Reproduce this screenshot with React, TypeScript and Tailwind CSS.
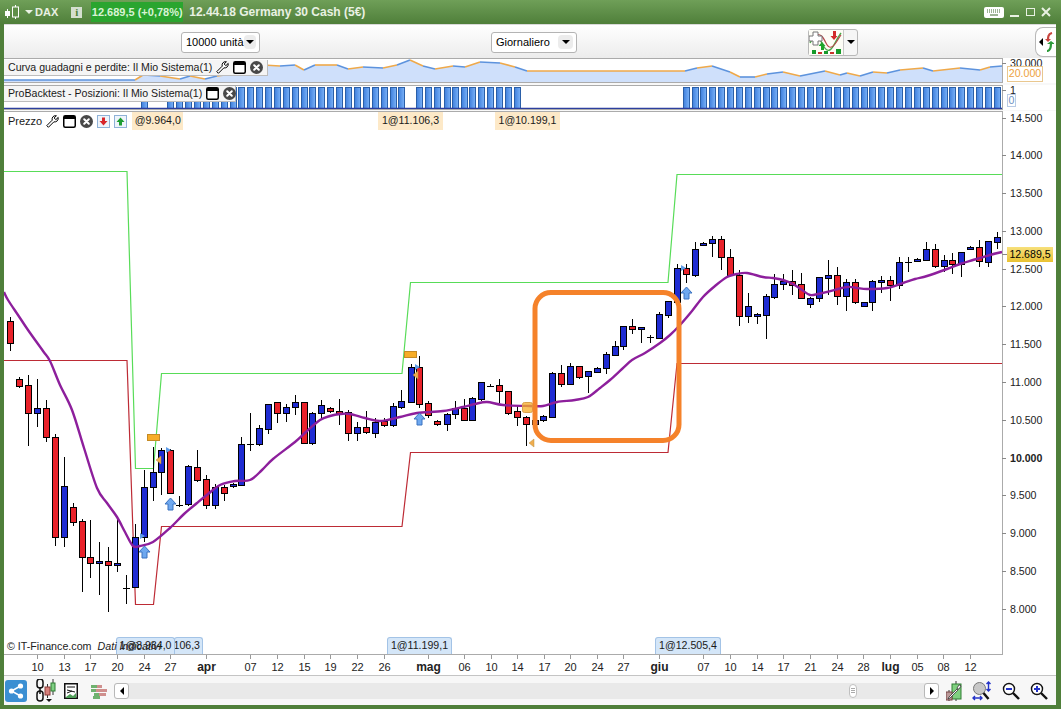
type Candle = [number, number, number, number, number, "r" | "b" | "k"];

const CANDLES: Candle[] = [
  [10, 321, 343, 317, 351, "r"], [19, 379, 386, 377, 388, "r"], [28, 385, 413, 375, 446, "r"], [37, 408, 413, 379, 427, "b"],
  [46, 408, 437, 400, 442, "r"], [55, 437, 537, 434, 546, "r"], [64, 486, 537, 457, 547, "b"], [73, 507, 522, 503, 526, "r"],
  [82, 521, 557, 519, 592, "r"], [90, 557, 563, 520, 578, "r"], [99, 561, 563, 542, 595, "b"], [108, 561, 565, 547, 612, "r"],
  [117, 563, 565, 518, 572, "b"], [126, 588, 588, 575, 604, "k"], [135, 537, 587, 524, 588, "b"], [144, 487, 537, 470, 542, "b"],
  [153, 472, 487, 447, 501, "b"], [161, 450, 472, 448, 495, "b"], [170, 450, 493, 449, 494, "r"], [179, 505, 505, 496, 507, "k"],
  [188, 466, 504, 465, 506, "b"], [197, 467, 480, 450, 482, "r"], [206, 479, 505, 475, 509, "r"], [215, 487, 505, 484, 509, "b"],
  [224, 487, 493, 485, 501, "r"], [233, 484, 486, 483, 488, "b"], [241, 444, 485, 437, 486, "b"], [250, 444, 444, 413, 451, "k"],
  [259, 428, 444, 425, 446, "b"], [268, 404, 429, 404, 434, "b"], [277, 402, 413, 402, 423, "r"], [286, 407, 413, 404, 422, "b"],
  [295, 402, 407, 395, 415, "b"], [304, 402, 443, 402, 444, "r"], [312, 413, 443, 412, 445, "b"], [321, 405, 413, 400, 418, "b"],
  [330, 408, 411, 407, 413, "r"], [339, 411, 413, 399, 425, "r"], [348, 412, 433, 410, 441, "r"], [357, 427, 433, 422, 441, "b"],
  [366, 427, 432, 411, 434, "r"], [375, 422, 433, 418, 438, "b"], [384, 421, 425, 418, 427, "r"], [393, 406, 425, 403, 427, "b"],
  [401, 401, 407, 390, 409, "b"], [411, 367, 402, 364, 403, "b"], [419, 367, 404, 356, 408, "r"], [428, 403, 415, 401, 418, "r"],
  [437, 421, 424, 420, 426, "r"], [447, 414, 424, 413, 431, "b"], [455, 408, 414, 401, 419, "b"], [464, 408, 420, 399, 420, "r"],
  [472, 398, 420, 397, 421, "b"], [481, 382, 399, 382, 401, "b"], [490, 386, 386, 384, 387, "k"], [499, 385, 391, 379, 403, "r"],
  [508, 391, 413, 391, 415, "r"], [517, 411, 417, 405, 426, "r"], [526, 417, 424, 416, 446, "r"], [535, 420, 424, 418, 426, "b"],
  [543, 416, 420, 415, 422, "b"], [552, 373, 417, 372, 417, "b"], [561, 373, 384, 365, 387, "r"], [570, 366, 384, 363, 385, "b"],
  [579, 366, 377, 366, 379, "r"], [588, 371, 376, 371, 393, "b"], [597, 368, 372, 367, 373, "b"], [606, 354, 368, 352, 374, "b"],
  [615, 346, 355, 341, 356, "b"], [623, 326, 346, 326, 350, "b"], [632, 326, 329, 319, 334, "r"], [641, 327, 329, 327, 343, "b"],
  [650, 337, 337, 335, 343, "k"], [659, 314, 338, 312, 339, "b"], [668, 301, 315, 301, 318, "b"], [677, 268, 302, 264, 302, "b"],
  [686, 268, 274, 264, 283, "r"], [695, 249, 275, 242, 277, "b"], [703, 243, 245, 242, 246, "b"], [712, 239, 243, 236, 257, "b"],
  [721, 239, 257, 236, 270, "r"], [730, 257, 275, 249, 275, "r"], [739, 275, 316, 270, 326, "r"], [748, 306, 316, 293, 323, "b"],
  [757, 314, 316, 313, 324, "b"], [766, 296, 315, 294, 339, "b"], [774, 284, 297, 274, 299, "b"], [783, 281, 284, 274, 290, "b"],
  [792, 281, 285, 270, 295, "r"], [801, 284, 298, 273, 299, "r"], [810, 298, 304, 297, 308, "b"], [819, 277, 298, 277, 302, "b"],
  [828, 275, 278, 260, 295, "b"], [837, 275, 296, 267, 305, "r"], [846, 282, 296, 279, 311, "b"], [855, 282, 302, 279, 304, "r"],
  [864, 302, 306, 302, 307, "b"], [872, 281, 302, 280, 311, "b"], [881, 280, 282, 276, 293, "b"], [890, 280, 285, 276, 301, "r"],
  [899, 262, 285, 257, 289, "b"], [908, 262, 262, 257, 272, "k"], [917, 259, 261, 258, 262, "b"], [926, 249, 260, 242, 261, "b"],
  [935, 249, 266, 244, 268, "r"], [944, 260, 266, 255, 272, "b"], [952, 260, 264, 253, 274, "r"], [961, 252, 264, 252, 277, "b"],
  [970, 247, 249, 246, 250, "b"], [979, 247, 261, 240, 267, "r"], [988, 241, 262, 241, 267, "b"], [997, 237, 242, 232, 249, "b"],
];

const GREEN_LINE = "4,171.5 127,171.5 135.5,468.5 153.5,468.5 161.5,373.5 402,373.5 410.5,282.5 668,282.5 677,174.5 1002,174.5";
const RED_LINE = "4,360.5 127,360.5 135.5,604.5 153.5,604.5 161.5,526.5 402,526.5 410.5,452.5 668,452.5 677,363.5 1002,363.5";
const AVERAGE: [number, number][] = [
  [4, 292], [8, 300], [18, 315], [28, 330], [43, 351], [50, 361], [60, 385], [72, 410], [84, 448], [97, 488], [107, 503], [117, 517],
  [125, 532], [133, 546], [140, 546], [153, 542], [170, 528], [184, 514], [197, 503], [208, 494], [220, 485], [235, 481], [250, 480],
  [262, 470], [273, 459], [295, 442], [307, 431], [320, 420], [330, 416], [340, 414], [350, 414], [365, 418], [380, 421], [400, 417],
  [417, 413], [443, 411], [463, 407], [475, 404], [487, 402], [503, 405], [530, 406], [543, 406], [557, 402], [575, 400], [588, 397],
  [600, 388], [610, 380], [622, 369], [632, 360], [645, 353], [660, 343], [670, 335], [680, 325], [692, 311], [703, 297], [715, 286],
  [727, 277], [737, 274], [747, 273], [763, 277], [773, 278], [783, 280], [793, 284], [802, 290], [810, 295], [818, 294], [827, 292],
  [847, 287], [857, 288], [867, 289], [887, 288], [903, 283], [915, 279], [927, 276], [947, 269], [960, 264], [973, 260], [990, 255],
  [1002, 252],
];

// equity curve, every other stretch is orange
const EQUITY: [number, number][] = [
  [4, 80], [135, 80], [143, 75], [160, 76], [180, 79], [190, 76], [205, 79], [217, 76], [233, 74], [263, 65], [280, 66], [295, 65],
  [304, 70], [315, 65], [337, 65], [348, 69], [363, 67], [383, 68], [397, 65], [410, 60], [423, 66], [435, 69], [453, 66], [465, 67],
  [480, 62], [500, 63], [515, 67], [527, 71], [685, 71], [697, 68], [712, 66], [730, 72], [740, 77], [755, 77], [767, 74], [783, 72],
  [800, 76], [825, 71], [840, 75], [847, 73], [860, 76], [873, 72], [887, 73], [900, 70], [923, 68], [933, 71], [960, 68], [980, 70],
  [990, 67], [1002, 66],
];

const PRICES: [string, number, boolean?][] = [
  ["14.500", 118], ["14.000", 155], ["13.500", 193], ["13.000", 231], ["12.500", 269], ["12.000", 306], ["11.500", 344],
  ["11.000", 382], ["10.500", 420], ["10.000", 458, true], ["9.500", 495], ["9.000", 533], ["8.500", 571], ["8.000", 609],
];

const DATES: [string, number, boolean?][] = [
  ["10", 37], ["13", 64], ["17", 90], ["20", 117], ["24", 144], ["27", 170], ["apr", 206, true], ["07", 250], ["12", 277], ["15", 304],
  ["19", 330], ["22", 357], ["26", 384], ["mag", 428, true], ["06", 464], ["10", 491], ["14", 517], ["17", 544], ["20", 570], ["24", 597],
  ["27", 623], ["giu", 659, true], ["07", 703], ["10", 730], ["14", 757], ["17", 783], ["21", 810], ["24", 837], ["28", 863],
  ["lug", 890, true], ["05", 917], ["08", 943], ["12", 970],
];

const UP_ARROWS = [[144, 546], [170, 498], [419, 413], [686, 287]];
const BLUE_FLAGS = [[140, 536], [166, 450], [415, 367], [681, 268]];
const ORANGE_FLAGS = [[157, 460], [414, 375], [530, 443]];

const isInPosition = (x: number) => x === 144 || (x >= 170 && x <= 401) || (x >= 419 && x <= 517) || x >= 686;

// catmull-rom through the points so the average doesn't look kinked
function smoothPath(pts: [number, number][]) {
  let d = `M${pts[0][0]} ${pts[0][1]}`;
  for (let i = 0; i < pts.length - 1; i++) {
    const p0 = pts[Math.max(i - 1, 0)];
    const p1 = pts[i];
    const p2 = pts[i + 1];
    const p3 = pts[Math.min(i + 2, pts.length - 1)];
    const c1x = p1[0] + (p2[0] - p0[0]) / 6;
    const c1y = p1[1] + (p2[1] - p0[1]) / 6;
    const c2x = p2[0] - (p3[0] - p1[0]) / 6;
    const c2y = p2[1] - (p3[1] - p1[1]) / 6;
    d += `C${c1x} ${c1y} ${c2x} ${c2y} ${p2[0]} ${p2[1]}`;
  }
  return d;
}

function PriceTag({ text, className }: { text: string; className: string }) {
  return <div className={`absolute flex items-center justify-center whitespace-nowrap ${className}`}>{text}</div>;
}

function WindowIcon() {
  return (
    <svg width="13" height="13" viewBox="0 0 13 13" className="shrink-0">
      <rect x="0.75" y="0.75" width="11.5" height="11.5" rx="1.5" fill="#fff" stroke="#000" strokeWidth="1.5" />
      <rect x="1" y="1" width="11" height="3" fill="#000" />
    </svg>
  );
}

function CloseIcon() {
  return (
    <svg width="13" height="13" viewBox="0 0 13 13" className="shrink-0">
      <circle cx="6.5" cy="6.5" r="6.5" fill="#484848" />
      <path d="M4.2 4.2l4.6 4.6M8.8 4.2l-4.6 4.6" stroke="#fff" strokeWidth="2" strokeLinecap="round" />
    </svg>
  );
}

function ToolIcon() {
  return (
    <svg width="13" height="13" viewBox="0 0 13 13" className="shrink-0">
      <path
        d="M0.8 10.6L6.2 5.2C5.6 2.6 7.2 0.6 9.8 0.6L10.4 0.7L8.2 3L9.8 4.7L12.2 2.4C12.7 5.2 10.6 7.4 7.8 6.9L2.4 12.3z"
        fill="#fff"
        stroke="#000"
        strokeWidth="1"
        strokeLinejoin="round"
      />
    </svg>
  );
}

function OrderBox({ color, up }: { color: string; up?: boolean }) {
  return (
    <svg width="13" height="13" viewBox="0 0 13 13" className="shrink-0">
      <rect x="0.5" y="0.5" width="12" height="12" fill="#eef4fb" stroke="#8fb2d8" />
      <path d={up ? "M6.5 2.5L10.5 7H8v3.5H5V7H2.5z" : "M6.5 10.5L10.5 6H8V2.5H5V6H2.5z"} fill={color} />
    </svg>
  );
}

function SelectBox({ label, className }: { label: string; className: string }) {
  return (
    <div className={`flex h-[21px] items-center justify-between rounded-[3px] border border-[#b4b4b4] bg-white pl-1 pr-[3px] ${className}`}>
      <span className="whitespace-nowrap text-[11px] text-black">{label}</span>
      <span className="flex h-[14px] w-[15px] items-center justify-center rounded-sm bg-[#ececec]">
        <span className="h-0 w-0 border-x-[4px] border-t-[4px] border-x-transparent border-t-black" />
      </span>
    </div>
  );
}

function StrategyButton() {
  return (
    <div className="ml-[231px] flex h-[27px] w-[50px] rounded-[3px] border border-[#b8b8b8] bg-[#f6f6f6]">
      <svg width="34" height="25" viewBox="0 0 34 25" className="shrink-0">
        <rect width="34" height="25" fill="#fdfdf6" />
        <path d="M1 13C6 3 9 5 14 15s9 4 12-2 4-7 6-10" fill="none" stroke="#4aa84a" strokeWidth="1.4" />
        <path d="M6 5c6-2 8 2 11 8s6 5 9 1 3-5 6-9" fill="none" stroke="#b5474a" strokeWidth="1.2" />
        <path d="M4 2h5v4h4v5H9v4H4v-4H0V6h4z" fill="#fff" stroke="#777" strokeWidth="1" />
        <path d="M13 12l3.5 4H15v4h-3v-4h-2.5z" fill="#1ea52b" />
        <path d="M25 10l3.5-4H27V1h-3v5h-2.5z" fill="#d22b2b" />
        <path d="M3 20h4v4H3zM15 21h4v3h-4zM27 19h5v5h-5z" fill="#169a2a" />
        <path d="M9 22h4v2H9zM21 22h4v2h-4z" fill="#c9332f" />
      </svg>
      <span className="flex flex-1 items-center justify-center border-l border-[#c8c8c8]">
        <span className="h-0 w-0 border-x-[4px] border-t-[4px] border-x-transparent border-t-black" />
      </span>
    </div>
  );
}

function IndicatorTab() {
  return (
    <div className="ml-auto flex h-[30px] w-[21px] items-center rounded-l-lg border-y border-l border-[#b8b8b8] bg-white pl-[3px]">
      <span className="h-0 w-0 shrink-0 border-y-[4px] border-r-[4px] border-y-transparent border-r-black" />
      <svg width="10" height="20" viewBox="0 0 10 20" className="ml-px shrink-0">
        <path d="M8 1C4 2 4 5 4 9" fill="none" stroke="#c8453f" strokeWidth="2.2" />
        <path d="M1 7h6l-3 3z" fill="#c8453f" />
        <path d="M3 19c3 0 4-3 4-8" fill="none" stroke="#2d9b3b" strokeWidth="2.2" />
        <path d="M3 12h8l-4-3z" fill="#2d9b3b" />
      </svg>
    </div>
  );
}

function EquityPane() {
  const area = `4,82 ${EQUITY.map((p) => p.join(",")).join(" ")} 1002,82`;
  return (
    <div className="relative h-[25px] shrink-0 bg-white">
      <svg viewBox="4 58 1052 25" className="block h-full w-full">
        <polygon points={area} fill="#cfe0fb" />
        {EQUITY.slice(1).map((p, i) => (
          <line key={i} x1={EQUITY[i][0]} y1={EQUITY[i][1]} x2={p[0]} y2={p[1]} stroke={i % 2 ? "#efa94a" : "#5d93dd"} strokeWidth="1.6" />
        ))}
        <rect x="3" y="58.5" width="999.5" height="24" fill="none" stroke="#ababab" />
        <line x1="1002" y1="63.5" x2="1006" y2="63.5" stroke="#888" />
        <text x="1010" y="67" fontSize="10.6" fill="#222">30.000</text>
      </svg>
      <PriceTag text="20.000" className="left-[1003px] top-[8px] h-[16px] w-[36px] border border-[#e9c78f] bg-white text-[10.6px] text-[#eda23e]" />
      <div className="absolute left-0 top-[2px] flex h-[16px] w-[264px] items-center gap-[4px] border-b border-r border-[#bdbdbd] bg-[#f5f5f5] pl-1 text-[10.6px] text-[#1a1a1a]">
        <span className="whitespace-nowrap">Curva guadagni e perdite: Il Mio Sistema(1)</span>
        <ToolIcon />
        <WindowIcon />
        <CloseIcon />
      </div>
    </div>
  );
}

function PositionPane() {
  return (
    <div className="relative mt-[2px] h-[25px] shrink-0 bg-white">
      <svg viewBox="4 85 1052 25" className="block h-full w-full">
        <defs>
          <linearGradient id="bar" x1="0" x2="1" y1="0" y2="0">
            <stop offset="0" stopColor="#3f7fdc" />
            <stop offset="1" stopColor="#7ab2f8" />
          </linearGradient>
        </defs>
        {CANDLES.filter((c) => isInPosition(c[0])).map((c) => (
          <rect key={c[0]} x={c[0] - 2.5} y="87.5" width="6" height="21" fill="url(#bar)" stroke="#2a5fa8" />
        ))}
        <line x1="4" y1="108.5" x2="1002" y2="108.5" stroke="#2c3f9e" strokeWidth="1.5" />
        <rect x="3" y="85.5" width="999.5" height="24" fill="none" stroke="#ababab" />
        <line x1="1002" y1="90.5" x2="1006" y2="90.5" stroke="#888" />
        <text x="1010" y="94" fontSize="10.6" fill="#222">1</text>
      </svg>
      <PriceTag text="0" className="left-[1003px] top-[9px] h-[13px] w-[9px] border border-[#b9cbe4] bg-white text-[10.6px] text-[#6f93c4]" />
      <div className="absolute left-0 top-[1px] flex h-[16px] w-[232px] items-center gap-[4px] border-b border-r border-[#bdbdbd] bg-[#f5f5f5] pl-1 text-[10.6px] text-[#1a1a1a]">
        <span className="whitespace-nowrap">ProBacktest - Posizioni: Il Mio Sistema(1)</span>
        <WindowIcon />
        <CloseIcon />
      </div>
    </div>
  );
}

function CandleMark({ c }: { c: Candle }) {
  const [x, top, bottom, wickTop, wickBottom, kind] = c;
  const height = bottom - top;
  return (
    <g>
      <line x1={x + 0.5} y1={wickTop} x2={x + 0.5} y2={wickBottom} stroke="#000" />
      {kind === "k" ? (
        <line x1={x - 3} y1={top + 0.5} x2={x + 4} y2={top + 0.5} stroke="#000" />
      ) : (
        <rect x={x - 2.5} y={top + 0.5} width="6" height={height} fill={kind === "r" ? "#e9222a" : "#1f2cd3"} stroke="#000" />
      )}
    </g>
  );
}

function PricePane() {
  return (
    <div className="relative mt-px h-[544px] shrink-0 bg-white">
      <svg viewBox="4 111 1052 544" className="block h-full w-full font-['Liberation_Sans',sans-serif]">
        <polyline points={GREEN_LINE} fill="none" stroke="#58dc58" strokeWidth="1.2" />
        <polyline points={RED_LINE} fill="none" stroke="#bd2b35" strokeWidth="1.2" />
        {CANDLES.map((c) => (
          <CandleMark key={c[0]} c={c} />
        ))}
        <path d={smoothPath(AVERAGE)} fill="none" stroke="#8d1f9c" strokeWidth="2.4" strokeLinejoin="round" />

        {UP_ARROWS.map(([x, y]) => (
          <path key={x} d={`M${x + 0.5} ${y}l5.5 6h-3v6h-5v-6h-3z`} fill="#6ea8ef" stroke="#3a72c0" />
        ))}
        {BLUE_FLAGS.map(([x, y]) => (
          <path key={x} d={`M${x} ${y - 3}l5 3-5 3z`} fill="#5f9de8" />
        ))}
        {ORANGE_FLAGS.map(([x, y]) => (
          <path key={x} d={`M${x + 4} ${y - 4}l-5 4 5 4z`} fill="#f0ad4e" stroke="#b89040" strokeWidth="0.5" />
        ))}
        <rect x="147.5" y="434.5" width="12" height="6" fill="#f7ad27" stroke="#c48a25" />
        <rect x="404.5" y="351.5" width="12" height="6" fill="#f7ad27" stroke="#c48a25" />
        <rect x="522.5" y="402.5" width="10" height="10" rx="2" fill="#f7ad27" fillOpacity="0.75" stroke="#d9a04a" />

        <rect x="535" y="292.5" width="144" height="148" rx="16" fill="none" stroke="#f5822a" strokeWidth="5" />

        <line x1="1002.5" y1="111" x2="1002.5" y2="655" stroke="#ababab" />
        <line x1="3" y1="111.5" x2="1002" y2="111.5" stroke="#ababab" />
        <line x1="3" y1="654.5" x2="1002" y2="654.5" stroke="#ababab" />
        {PRICES.map(([label, y, bold]) => (
          <g key={label}>
            <line x1="1002" y1={y + 0.5} x2="1006" y2={y + 0.5} stroke="#888" />
            <text x="1010" y={y + 4} fontSize="10.6" fontWeight={bold ? 700 : 400} fill="#222">{label}</text>
          </g>
        ))}
        <line x1="1002" y1="254.5" x2="1007" y2="254.5" stroke="#888" />
      </svg>

      <PriceTag text="12.689,5" className="left-[1003px] top-[136px] h-[15px] w-[46px] bg-gradient-to-b from-[#f7e07a] to-[#e9c22f] text-[10.6px] text-black" />

      <div className="absolute left-0 top-px flex h-[18px] items-center pl-1 text-[11px] text-[#1a1a1a]">
        <span className="mr-[4px]">Prezzo</span>
        <div className="flex items-center gap-[4px]">
          <ToolIcon />
          <WindowIcon />
          <CloseIcon />
          <OrderBox color="#d8262b" />
          <OrderBox color="#1e9d32" up />
        </div>
        <span className="ml-[5px] flex h-[18px] w-[51px] items-center justify-center bg-[#fde9c8] text-[10.6px]">@9.964,0</span>
      </div>
      <PriceTag text="1@11.106,3" className="left-[374px] top-px h-[18px] w-[65px] bg-[#fde9c8] text-[10.6px] text-[#1a1a1a]" />
      <PriceTag text="1@10.199,1" className="left-[491px] top-px h-[18px] w-[65px] bg-[#fde9c8] text-[10.6px] text-[#1a1a1a]" />

      <PriceTag text="106,3" className="left-[170px] top-[526px] h-[17px] w-[29px] justify-end rounded-t-[3px] border border-b-0 border-[#a3c3e6] bg-[#d4e6f8] pr-[2px] text-[10.6px] text-[#1a1a1a]" />
      <PriceTag text="1@8.984,0" className="left-[112px] top-[526px] h-[17px] w-[59px] rounded-t-[3px] border border-b-0 border-[#a3c3e6] bg-[#d4e6f8] text-[10.6px] text-[#1a1a1a]" />
      <PriceTag text="1@11.199,1" className="left-[383px] top-[526px] h-[17px] w-[65px] rounded-t-[3px] border border-b-0 border-[#a3c3e6] bg-[#d4e6f8] text-[10.6px] text-[#1a1a1a]" />
      <PriceTag text="1@12.505,4" className="left-[651px] top-[526px] h-[17px] w-[66px] rounded-t-[3px] border border-b-0 border-[#a3c3e6] bg-[#d4e6f8] text-[10.6px] text-[#1a1a1a]" />
      <div className="absolute bottom-[1px] left-[3px] flex gap-[6px] whitespace-nowrap text-[10.7px] text-[#222]">
        <span>© IT-Finance.com</span>
        <i>Dati Indicativi</i>
      </div>
    </div>
  );
}

function TimeAxis() {
  return (
    <div className="h-[21px] shrink-0 border-b border-[#c4c4c4] bg-white">
      <svg viewBox="4 655 1052 20" className="block h-full w-full">
        {DATES.map(([label, x, bold]) => (
          <g key={x}>
            <line x1={x + 0.5} y1="655" x2={x + 0.5} y2="659" stroke="#999" />
            <text x={x + 0.5} y="671" fontSize={bold ? 12 : 11} fontWeight={bold ? 700 : 400} textAnchor="middle" fill="#222">{label}</text>
          </g>
        ))}
      </svg>
    </div>
  );
}

function ScrollArrow({ right }: { right?: boolean }) {
  return (
    <span className="flex h-full w-[15px] items-center justify-center rounded-[3px] border border-[#b8b8b8] bg-white">
      <span className={`h-0 w-0 border-y-[4px] border-y-transparent ${right ? "border-l-[4px] border-l-black" : "border-r-[4px] border-r-black"}`} />
    </span>
  );
}

function BottomBar() {
  return (
    <div className="flex h-[29px] shrink-0 items-center bg-[#f7f7f7]">
      <div className="ml-px flex h-[22px] w-[22px] items-center justify-center rounded-[3px] bg-[#3b8fd2]">
        <svg width="16" height="16" viewBox="0 0 16 16">
          <path d="M12.5 3L3.5 8l9 5" fill="none" stroke="#fff" strokeWidth="1.5" />
          <circle cx="12.5" cy="3" r="2.6" fill="#fff" />
          <circle cx="3.5" cy="8" r="2.6" fill="#fff" />
          <circle cx="12.5" cy="13" r="2.6" fill="#fff" />
        </svg>
      </div>
      <svg width="24" height="24" viewBox="0 0 24 24" className="ml-[5px]">
        <path d="M5 3a3 3 0 016 0v3a3 3 0 01-6 0zM5 15a3 3 0 016 0v4a3 3 0 01-6 0z" fill="none" stroke="#111" strokeWidth="1.5" />
        <path d="M8 8v7" stroke="#111" strokeWidth="1.5" />
        <path d="M15.5 5v14" stroke="#333" />
        <rect x="13" y="8" width="5" height="8" fill="#d9817c" stroke="#8a3c39" />
        <path d="M21 0v16" stroke="#333" />
        <rect x="19" y="4" width="4" height="8" fill="#7fcf83" stroke="#2e7d32" />
        <path d="M14 20h6l-3 3z" fill="#111" />
      </svg>
      <svg width="14" height="16" viewBox="0 0 14 16" className="ml-[8px]">
        <rect x="0.75" y="0.75" width="12.5" height="14.5" fill="#fff" stroke="#111" strokeWidth="1.5" />
        <path d="M3 4h8M3 7l8 2M3 10l5-2" stroke="#111" />
        <path d="M2 14l4-3 3 2 3-3v5H2z" fill="#4f9e58" />
      </svg>
      <svg width="16" height="16" viewBox="0 0 16 16" className="ml-[13px]">
        <path d="M0 2h8v3H0zM3 10h7v3H3zM2 13h7v3H2z" fill="#6fb26f" />
        <path d="M6 2h5v3H6zM5 6h11v3H5zM8 10h7v3H8z" fill="#cf8f8d" />
        <path d="M0 6h5v3H0z" fill="#6fb26f" />
      </svg>
      <div className="ml-[7px] flex h-[16px] w-[825px] items-center justify-between rounded-[3px] bg-[#e9e9e9]">
        <ScrollArrow />
        <div className="ml-auto mr-[67px] flex h-[14px] w-[8px] flex-col items-center justify-center gap-px rounded-sm border border-[#c0c0c0] bg-white">
          <span className="h-px w-[4px] bg-[#aaa]" />
          <span className="h-px w-[4px] bg-[#aaa]" />
          <span className="h-px w-[4px] bg-[#aaa]" />
        </div>
        <ScrollArrow right />
      </div>
      <svg width="16" height="20" viewBox="0 0 16 20" className="ml-[7px]">
        <path d="M10 0v20" stroke="#333" />
        <rect x="6" y="3" width="9" height="15" fill="#7fd07f" stroke="#2e7d32" />
        <path d="M3 9v11" stroke="#333" />
        <rect x="0" y="11" width="6" height="8" fill="#b99" stroke="#744" />
        <path d="M13 4l-2 3 1 2-8 8-2 1 1-2 8-8 2 0 2-3-1-1z" fill="#fff" stroke="#333" strokeWidth="0.8" />
      </svg>
      <svg width="20" height="20" viewBox="0 0 20 20" className="ml-[10px]">
        <circle cx="7.5" cy="7.5" r="6" fill="#c8c8c8" stroke="#777" />
        <path d="M11.5 12l5 6" stroke="#111" strokeWidth="2.5" />
        <path d="M16.5 1v9M14.5 3l2-2 2 2M14.5 8l2 2 2-2" fill="none" stroke="#2433c8" strokeWidth="1.4" />
        <path d="M1 17h9M3 15l-2 2 2 2M8 15l2 2-2 2" fill="none" stroke="#2433c8" strokeWidth="1.4" />
      </svg>
      <svg width="18" height="18" viewBox="0 0 18 18" className="ml-[10px]">
        <circle cx="7" cy="7" r="5.5" fill="#fff" stroke="#111" strokeWidth="1.4" />
        <path d="M11 11l6 6" stroke="#111" strokeWidth="2.4" />
        <path d="M4 7h6" stroke="#2433c8" strokeWidth="2" />
      </svg>
      <svg width="18" height="18" viewBox="0 0 18 18" className="ml-[10px]">
        <circle cx="7" cy="7" r="5.5" fill="#fff" stroke="#111" strokeWidth="1.4" />
        <path d="M11 11l6 6" stroke="#111" strokeWidth="2.4" />
        <path d="M4 7h6M7 4v6" stroke="#2433c8" strokeWidth="2" />
      </svg>
    </div>
  );
}

function TitleBar() {
  return (
    <div className="flex h-[24px] shrink-0 items-center bg-gradient-to-b from-[#6f9f58] to-[#4f7f3a] text-[#e9f1e3]">
      <svg width="16" height="14" viewBox="0 0 16 14" className="ml-[5px] shrink-0">
        <rect x="0" y="6" width="5" height="5" fill="#fff" />
        <path d="M2.5 4v9M10.5 0v14" stroke="#fff" />
        <rect x="7.5" y="2" width="6" height="10" fill="#5f8f48" stroke="#fff" />
      </svg>
      <span className="ml-[4px] h-0 w-0 shrink-0 border-x-[4px] border-t-[4px] border-x-transparent border-t-[#e9f1e3]" />
      <span className="ml-[2px] text-[11px] font-bold">DAX</span>
      <span className="ml-[13px] flex h-[11px] w-[11px] shrink-0 items-center justify-center bg-[#d5dfcf] font-['Liberation_Serif',serif] text-[11px] font-bold text-[#4f7f3a]">i</span>
      <span className="ml-[9px] flex h-[20px] w-[92px] shrink-0 items-center justify-center whitespace-nowrap bg-[#2aa52f] text-[11px] font-bold text-[#d8f3d4]">12.689,5 (+0,78%)</span>
      <span className="ml-[6px] whitespace-nowrap text-[12px] font-bold">12.44.18 Germany 30 Cash (5€)</span>
      <svg width="20" height="11" viewBox="0 0 20 11" className="ml-auto shrink-0">
        <rect width="20" height="11" rx="2" fill="#fff" />
        <path d="M3 3h14M3 5h14" stroke="#3f6b2e" strokeDasharray="1 1" />
        <path d="M6 8h8" stroke="#3f6b2e" />
      </svg>
      <span className="ml-[6px] mt-[8px] h-[2px] w-[9px] bg-[#e9f1e3]" />
      <span className="ml-[7px] h-[8px] w-[9px] border border-[#e9f1e3]" />
      <svg width="10" height="10" viewBox="0 0 10 10" className="ml-[6px] mr-[10px] shrink-0">
        <path d="M1 1l8 8M9 1l-8 8" stroke="#e9f1e3" strokeWidth="2" />
      </svg>
    </div>
  );
}

export default function App() {
  return (
    <div className="flex h-[709px] w-[1061px] flex-col overflow-hidden bg-[#4f7f3a] font-['Liberation_Sans',sans-serif]">
      <TitleBar />
      <div className="ml-[4px] mr-[5px] flex min-h-0 flex-1 flex-col bg-[#f8f8f8]">
        <div className="flex h-[34px] shrink-0 items-center border-t border-[#d9d9d9] bg-gradient-to-b from-white to-[#ececec] pt-[1px]">
          <SelectBox label="10000 unità" className="ml-[177px] w-[79px]" />
          <SelectBox label="Giornaliero" className="ml-[231px] w-[86px]" />
          <StrategyButton />
          <IndicatorTab />
        </div>
        <EquityPane />
        <PositionPane />
        <PricePane />
        <TimeAxis />
        <BottomBar />
      </div>
      <div className="h-[4px] shrink-0" />
    </div>
  );
}
